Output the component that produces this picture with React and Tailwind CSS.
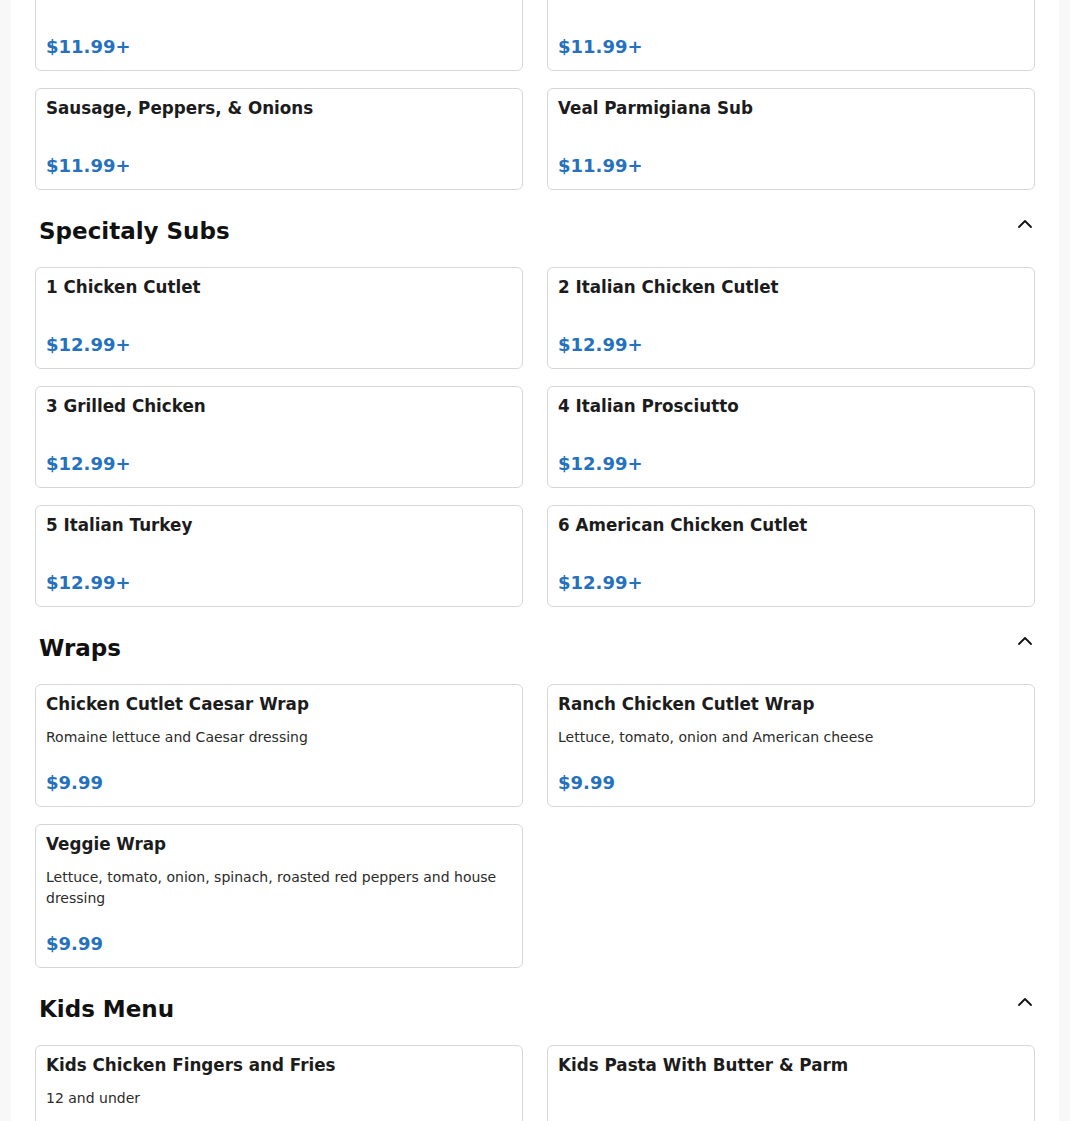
import { useState } from "react";

const sections = [
  {
    title: null,
    items: [
      { name: "Chicken Parmigiana Sub", price: "$11.99+" },
      { name: "Meatball Parmigiana Sub", price: "$11.99+" },
      { name: "Sausage, Peppers, & Onions", price: "$11.99+" },
      { name: "Veal Parmigiana Sub", price: "$11.99+" },
    ],
  },
  {
    title: "Specitaly Subs",
    items: [
      { name: "1 Chicken Cutlet", price: "$12.99+" },
      { name: "2 Italian Chicken Cutlet", price: "$12.99+" },
      { name: "3 Grilled Chicken", price: "$12.99+" },
      { name: "4 Italian Prosciutto", price: "$12.99+" },
      { name: "5 Italian Turkey", price: "$12.99+" },
      { name: "6 American Chicken Cutlet", price: "$12.99+" },
    ],
  },
  {
    title: "Wraps",
    items: [
      {
        name: "Chicken Cutlet Caesar Wrap",
        desc: "Romaine lettuce and Caesar dressing",
        price: "$9.99",
      },
      {
        name: "Ranch Chicken Cutlet Wrap",
        desc: "Lettuce, tomato, onion and American cheese",
        price: "$9.99",
      },
      {
        name: "Veggie Wrap",
        desc: "Lettuce, tomato, onion, spinach, roasted red peppers and house dressing",
        price: "$9.99",
      },
    ],
  },
  {
    title: "Kids Menu",
    items: [
      { name: "Kids Chicken Fingers and Fries", desc: "12 and under", price: "$8.99" },
      { name: "Kids Pasta With Butter & Parm", price: "$8.99" },
    ],
  },
];

function ChevronUp() {
  return (
    <svg width="16" height="16" viewBox="0 0 16 16" fill="none" className="mt-[1px]">
      <path d="M2 11 L8 5 L14 11" stroke="#111" strokeWidth="1.8" strokeLinecap="round" strokeLinejoin="round" />
    </svg>
  );
}

function ItemCard({ item }) {
  return (
    <div className="flex flex-col rounded-md border border-[#d6d6d6] bg-white p-[10px]">
      <h3 className="mb-[14px] text-[16.75px] font-bold leading-[18px] text-[#1c1c1c]">
        {item.name}
      </h3>
      {item.desc && (
        <p className="text-sm leading-[21px] text-[#2b2b2b]">{item.desc}</p>
      )}
      <div className="mt-auto pt-[21px] text-lg font-bold leading-[27px] text-[#2571bd]">
        {item.price}
      </div>
    </div>
  );
}

export default function App() {
  const [open] = useState(true);

  return (
    <div
      className="min-h-screen bg-[#f8f8f8]"
      style={{ fontFamily: '"DejaVu Sans", Verdana, sans-serif' }}
    >
      <div className="mx-auto -mt-[31px] max-w-[1048px] bg-white px-6 pb-10">
        {sections.map((section, i) => (
          <section key={i}>
            {section.title && (
              <div className="mb-5 mt-[25px] flex items-start justify-between pl-1 pr-[2px]">
                <h2 className="text-[23px] font-bold leading-8 text-[#111]">
                  {section.title}
                </h2>
                {open && <ChevronUp />}
              </div>
            )}
            <div className="grid grid-cols-2 gap-x-6 gap-y-[17px]">
              {section.items.map((item) => (
                <ItemCard key={item.name} item={item} />
              ))}
            </div>
          </section>
        ))}
      </div>
    </div>
  );
}
